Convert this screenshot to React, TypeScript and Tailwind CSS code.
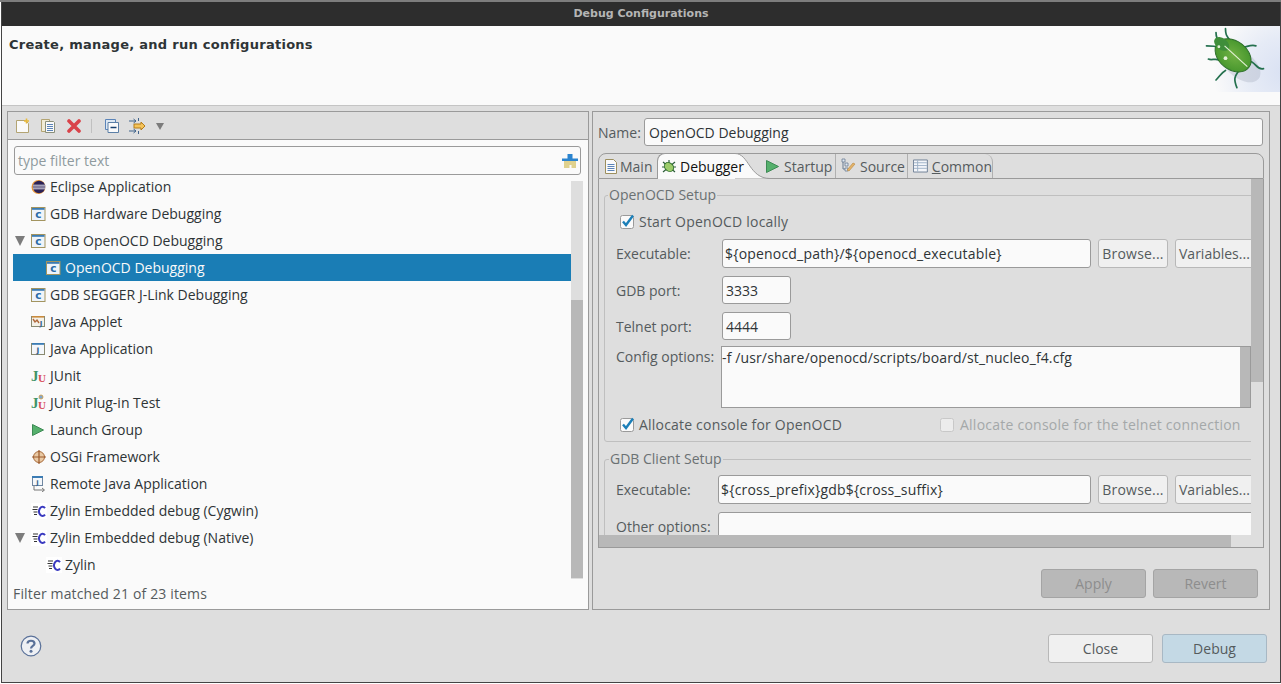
import type { ReactNode } from 'react';

const FONT = 'font-["Open_Sans","Noto_Sans",sans-serif]';

function CAppIcon() {
  return (
    <svg width="16" height="16" viewBox="0 0 16 16">
      <rect x="0.500" y="1.500" width="13.500" height="13" fill="#eef4fa" stroke="#a3945f" />
      <rect x="1" y="2" width="12.500" height="1.800" fill="#3b7cb4" />
      <text x="7.300" y="12.300" textAnchor="middle" fontSize="10.500" fontWeight="700" fill="#2a6ba6" fontFamily="DejaVu Sans">c</text>
    </svg>
  );
}

function JAppIcon() {
  return (
    <svg width="16" height="16" viewBox="0 0 16 16">
      <rect x="0.500" y="2.500" width="13" height="11" fill="#f4f7fb" stroke="#8a8a70" />
      <rect x="1" y="2" width="12" height="1.800" fill="#3b7cb4" />
      <text x="7" y="12" textAnchor="middle" fontSize="7.500" fontWeight="700" fill="#33638f" fontFamily="DejaVu Sans">J</text>
    </svg>
  );
}

function AppletIcon() {
  return (
    <svg width="16" height="16" viewBox="0 0 16 16">
      <rect x="0.500" y="2.500" width="13" height="10" fill="#f4f1e8" stroke="#8a8a70" />
      <path d="M2 5l2 3 2-2 2 3" fill="none" stroke="#b0683a" strokeWidth="1.400" />
      <rect x="1" y="2" width="12" height="1.600" fill="#c98a3c" />
      <text x="10" y="11.500" textAnchor="middle" fontSize="7" fontWeight="700" fill="#33638f" fontFamily="DejaVu Sans">J</text>
    </svg>
  );
}

function JUnitIcon({ plugin }: { plugin?: boolean }) {
  return (
    <svg width="16" height="18" viewBox="0 0 16 18">
      {plugin && <circle cx="10" cy="3" r="2" fill="#7ea6d0" stroke="#d29a3c" strokeWidth="0.800" />}
      <text x="0" y="14" fontSize="15" fontWeight="700" fill="#3f9468" fontFamily="Liberation Serif">J</text>
      <text x="7" y="15" fontSize="11" fontWeight="700" fill="#d8505c" fontFamily="Liberation Serif">U</text>
    </svg>
  );
}

function EclipseIcon() {
  return (
    <svg width="16" height="16" viewBox="0 0 16 16">
      <circle cx="7.500" cy="8" r="7" fill="#e8963a" />
      <circle cx="8.100" cy="8" r="6.200" fill="#2c2255" />
      <path d="M2 6.200h12.500M2 8h13M2 9.800h12.500" stroke="#f2f2f6" strokeWidth="0.900" />
    </svg>
  );
}

function PlayIcon() {
  return (
    <svg width="14" height="14" viewBox="0 0 14 14">
      <path d="M1.500 1.500l11 5.500-11 5.500z" fill="#55b06c" stroke="#3d8a55" />
    </svg>
  );
}

function OsgiIcon() {
  return (
    <svg width="16" height="16" viewBox="0 0 16 16">
      <circle cx="8" cy="8" r="5.500" fill="#e9c9a4" stroke="#a86a3a" />
      <path d="M8 1v14M1 8h14" stroke="#9c5a2c" strokeWidth="1.200" />
    </svg>
  );
}

function RemoteIcon() {
  return (
    <svg width="16" height="17" viewBox="0 0 16 17">
      <rect x="1.500" y="1.500" width="10" height="9" fill="#f4f7fb" stroke="#6f86a0" />
      <rect x="1" y="1" width="11" height="2" fill="#3b7cb4" />
      <text x="6.500" y="9.500" textAnchor="middle" fontSize="6.500" fontWeight="700" fill="#33638f" fontFamily="DejaVu Sans">J</text>
      <path d="M3 11v4h10M11 13l2.500 2-2.500 2" fill="none" stroke="#777" />
    </svg>
  );
}

function ZylinIcon() {
  return (
    <svg width="16" height="16" viewBox="0 0 16 16">
      <rect width="16" height="16" fill="#fff" />
      <path d="M2 4h5M1.500 6.500h5M2.500 9h4M3 11.500h3" stroke="#333" strokeWidth="1.100" />
      <path d="M14 5.200a3.400 4.600 0 1 0 0 6.400" fill="none" stroke="#3a3ac0" strokeWidth="2" />
    </svg>
  );
}

function Expander() {
  return (
    <svg width="10" height="10" viewBox="0 0 10 10">
      <path d="M0 0h10L5 10z" fill="#7c7c7c" />
    </svg>
  );
}

function Bug() {
  const legs = [
    'M27 26C22 18 20 16 20 10',
    'M26 28C20 24 16 24 10 24',
    'M26 40C20 36 16 40 12 38',
    'M30 50C26 52 24 56 20 60',
    'M44 50C40 56 38 58 42 68',
    'M54 40C62 40 62 50 70 48',
    'M46 24C50 28 54 22 62 24',
    'M36 20C32 14 30 14 30 6',
  ];
  return (
    <svg width="75" height="66" viewBox="0 0 75 66" className="shrink-0">
      <defs>
        <radialGradient id="corner" gradientUnits="userSpaceOnUse" cx="80" cy="46" r="72">
          <stop offset="0" stopColor="#d9e1f3" />
          <stop offset="0.500" stopColor="#e6ebf6" />
          <stop offset="1" stopColor="#fafafa" />
        </radialGradient>
        <radialGradient id="shell" cx="0.500" cy="0.500" r="0.650">
          <stop offset="0" stopColor="#6fb043" />
          <stop offset="0.700" stopColor="#4c9a30" />
          <stop offset="1" stopColor="#2c7a2a" />
        </radialGradient>
      </defs>
      <rect width="75" height="66" fill="url(#corner)" />
      <g transform="translate(-8 -3) scale(0.950)">
        <ellipse cx="46" cy="44" rx="24" ry="14" fill="#8a93a8" opacity="0.250" transform="rotate(38 46 44)" />
        {legs.map((d) => (
          <path key={d} d={d} fill="none" stroke="#24704e" strokeWidth="1.800" strokeLinecap="round" />
        ))}
        <ellipse cx="38" cy="34" rx="21" ry="15" fill="url(#shell)" stroke="#2d6e2a" transform="rotate(38 38 34)" />
        <ellipse cx="26" cy="22" rx="9" ry="6" fill="#3f8e3a" transform="rotate(38 26 22)" />
        <path d="M29 24L53 46" stroke="#e6f2d8" strokeWidth="1.200" />
        <circle cx="23" cy="25" r="1.500" fill="#e4f0d8" />
        <circle cx="30" cy="37" r="2" fill="#e4f0d8" />
      </g>
    </svg>
  );
}

function SmallBug() {
  return (
    <svg width="16" height="16" viewBox="0 0 16 16" className="shrink-0">
      <path d="M2 3l12 10M14 3L2 13M1 8h14M8 1v3" stroke="#2d5d3a" strokeWidth="1.200" />
      <ellipse cx="8" cy="8" rx="5" ry="4" fill="#9ccb6a" stroke="#2d6e2a" transform="rotate(40 8 8)" />
    </svg>
  );
}

function Toolbar() {
  return (
    <div className="flex h-[28px] items-center border-b border-[#9a9a9a] bg-[#dedede] pl-[8px]">
      <svg width="16" height="16" viewBox="0 0 16 16">
        <path d="M0.500 2.500h9l3 3v9h-12z" fill="#fafafa" stroke="#b3a473" />
        <path d="M10.500 0.500v5M8 3h5" stroke="#e8b93c" strokeWidth="1.600" />
      </svg>
      <svg className="ml-[8px]" width="16" height="16" viewBox="0 0 16 16">
        <path d="M1.500 1.500h8v12h-8z" fill="#f1ecd6" stroke="#b3a473" />
        <path d="M5.500 3.500h8l1 1v10h-9z" fill="#fafafa" stroke="#8a8f7a" />
        <path d="M7 6.500h6M7 8.500h6M7 10.500h6M7 12.500h6" stroke="#5b84b8" />
      </svg>
      <svg className="ml-[11px]" width="14" height="14" viewBox="0 0 14 14">
        <path d="M2 2l10 10M12 2L2 12" stroke="#d9434a" strokeWidth="3.600" strokeLinecap="round" />
      </svg>
      <div className="ml-[10px] h-[14px] w-px bg-[#c0c0c0]" />
      <svg className="ml-[13px]" width="14" height="14" viewBox="0 0 14 14">
        <path d="M0.500 0.500h10v10h-10z" fill="#dde8f3" stroke="#5b84b8" />
        <path d="M3 3.500h10.500v10H3z" fill="#fafafa" stroke="#5b7fa6" />
        <path d="M5.500 8.500h6" stroke="#173f6e" strokeWidth="1.500" />
      </svg>
      <svg className="ml-[10px]" width="17" height="16" viewBox="0 0 17 16">
        <path d="M0 3h7M0 13h7M4.500 1l2.500 2-2.500 2M4.500 11l2.500 2-2.500 2" fill="none" stroke="#41648c" />
        <path d="M9.500 0v3M9.500 13v3" stroke="#41648c" />
        <path d="M5 6h7V4l4 4-4 4v-2H5z" fill="#f4c35a" stroke="#b47c1a" />
      </svg>
      <svg className="ml-[9px]" width="10" height="10" viewBox="0 0 10 10">
        <path d="M1 2h8L5 9z" fill="#7c7c7c" />
      </svg>
    </div>
  );
}

const TREE: { label: string; icon: ReactNode; level?: boolean; open?: boolean; selected?: boolean }[] = [
  { label: 'Eclipse Application', icon: <EclipseIcon /> },
  { label: 'GDB Hardware Debugging', icon: <CAppIcon /> },
  { label: 'GDB OpenOCD Debugging', icon: <CAppIcon />, open: true },
  { label: 'OpenOCD Debugging', icon: <CAppIcon />, level: true, selected: true },
  { label: 'GDB SEGGER J-Link Debugging', icon: <CAppIcon /> },
  { label: 'Java Applet', icon: <AppletIcon /> },
  { label: 'Java Application', icon: <JAppIcon /> },
  { label: 'JUnit', icon: <JUnitIcon /> },
  { label: 'JUnit Plug-in Test', icon: <JUnitIcon plugin /> },
  { label: 'Launch Group', icon: <PlayIcon /> },
  { label: 'OSGi Framework', icon: <OsgiIcon /> },
  { label: 'Remote Java Application', icon: <RemoteIcon /> },
  { label: 'Zylin Embedded debug (Cygwin)', icon: <ZylinIcon /> },
  { label: 'Zylin Embedded debug (Native)', icon: <ZylinIcon />, open: true },
  { label: 'Zylin', icon: <ZylinIcon />, level: true },
];

function LeftPanel() {
  return (
    <div className="flex h-[499px] w-[582px] flex-col border border-[#9a9a9a] bg-[#fafafa]">
      <Toolbar />
      <div className="pl-[6px] pr-[7px] pt-[6px]">
        <div className="flex h-[29px] items-center justify-between rounded-[3px] border border-[#9a9a9a] bg-[#fafafa] pl-[3px] pr-[2px] text-[#8f9a9e]">
          <span>type filter text</span>
          <svg width="16" height="14" viewBox="0 0 16 14">
            <path d="M2 7h12v7H9.500v-3h-2v3H2z" fill="#dfd18e" />
            <path d="M5.500 0h5v4.500H16v2.500H0V4.500h5.500z" fill="#2b84cf" />
          </svg>
        </div>
      </div>
      <div className="flex h-[404px] pl-[5px]">
        <div className="h-full w-[558px] overflow-hidden">
          <div className="-mt-[2px]">
            {TREE.map((row) => (
              <div
                key={row.label}
                className={`flex h-[27px] items-center ${row.selected ? 'bg-[#1a7db5] text-[#fafafa]' : 'text-[#2e3436]'} ${row.level ? 'pl-[15px]' : ''}`}
              >
                <span className="flex w-[18px] shrink-0 pl-[2px]">{row.open && <Expander />}</span>
                <span className="flex w-[16px] shrink-0 justify-start">{row.icon}</span>
                <span className="ml-[3px] whitespace-nowrap">{row.label}</span>
              </div>
            ))}
          </div>
        </div>
        <div className="mt-[6px] h-[398px] w-[12px] bg-[#dedede] pt-[119px]">
          <div className="h-[278px] bg-[#b8b8b8]" />
        </div>
      </div>
      <div className="flex h-[29px] items-center pl-[5px] tracking-[0.15px] text-[#555b5d]">Filter matched 21 of 23 items</div>
    </div>
  );
}

function Tab({ width, icon, children, last }: { width: string; icon: ReactNode; children: ReactNode; last?: boolean }) {
  return (
    <div className={`flex h-full items-center border-r border-[#b0b0b0] text-[#555b5d] ${width} ${last ? 'rounded-tr-[8px]' : ''}`}>
      {icon}
      {children}
    </div>
  );
}

function TabStrip() {
  return (
    <div className="flex h-[26px] rounded-t-[8px] border-x border-b border-t border-[#9a9a9a] bg-[#dedede]">
      <div className="flex w-[58px] items-center pl-[5px] text-[#555b5d]">
        <svg width="14" height="15" viewBox="0 0 14 15">
          <path d="M1.500 0.500h8l3 3v11h-11z" fill="#fafafa" stroke="#9c8f5e" />
          <path d="M3.500 5.500h7M3.500 7.500h7M3.500 9.500h7M3.500 11.500h7" stroke="#5b84b8" />
        </svg>
        <span className="ml-[2px]">Main</span>
      </div>
      <div className="relative -mb-px -mt-px flex h-[26px] w-[78px] shrink-0 items-center rounded-tl-[8px] border-l border-t border-[#9a9a9a] bg-[#fafafa] pl-[3px] text-[#111]">
        <SmallBug />
        <span className="ml-[3px] whitespace-nowrap">Debugger</span>
      </div>
      <svg className="-mb-px -mt-px shrink-0" width="35" height="26" viewBox="0 0 35 26">
        <path d="M0 0.500C14 0.500 14 25.500 35 25.500H0z" fill="#fafafa" />
        <path d="M0 0.500C14 0.500 14 25.500 35 25.500" fill="none" stroke="#9a9a9a" />
      </svg>
      <Tab
        width="w-[66px]"
        icon={
          <svg className="-ml-[5px] shrink-0" width="15" height="15" viewBox="0 0 15 15">
            <path d="M1.500 1.500l12 6-12 6z" fill="#55b06c" stroke="#3d8a55" />
          </svg>
        }
      >
        <span className="ml-[4px]">Startup</span>
      </Tab>
      <Tab
        width="w-[72px] pl-[4px]"
        icon={
          <svg width="16" height="16" viewBox="0 0 16 16">
            <path d="M2 1h3v3H2zM5 5h3v3H5zM5 10h3v3H5z" fill="#dfe8f2" stroke="#6b7c93" strokeWidth="0.800" />
            <path d="M3 4v7h2" fill="none" stroke="#6b7c93" />
            <path d="M9 13l6-7-2-1-6 7z" fill="#e3b36a" stroke="#b9873a" strokeWidth="0.600" />
          </svg>
        }
      >
        <span className="ml-[4px]">Source</span>
      </Tab>
      <Tab
        width="w-[85px] pl-[5px]"
        last
        icon={
          <svg width="16" height="14" viewBox="0 0 16 14">
            <path d="M0.500 0.500h15v13h-15z" fill="#f4f6fa" stroke="#6b7c93" />
            <path d="M1 3.500h14M1 6.500h14M1 9.500h14M5 1v12" stroke="#9db0c6" />
          </svg>
        }
      >
        <span className="ml-[4px]">
          <span className="underline">C</span>ommon
        </span>
      </Tab>
      <div className="flex-1" />
    </div>
  );
}

function Field({ className, children }: { className: string; children?: ReactNode }) {
  return (
    <div className={`flex shrink-0 items-center rounded-[3px] border border-[#9a9a9a] bg-[#fafafa] text-[#2e3436] ${className}`}>
      <span className="whitespace-nowrap">{children}</span>
    </div>
  );
}

function Btn({ className, children }: { className: string; children: ReactNode }) {
  return (
    <div className={`flex shrink-0 items-center rounded-[3px] border border-[#b8b8b8] bg-[#f0f0f0] text-[#555b5d] ${className}`}>
      {children}
    </div>
  );
}

function Check({ on }: { on?: boolean }) {
  return (
    <svg width="15" height="15" viewBox="0 0 15 15" className="shrink-0">
      <rect x="0.500" y="1.500" width="13" height="13" rx="2" fill={on ? '#fafafa' : '#ececec'} stroke={on ? '#9a9a9a' : '#c8c8c8'} />
      {on && <path d="M3 7.500l3 3.500L13 1.500" fill="none" stroke="#1c7fb8" strokeWidth="2.400" />}
    </svg>
  );
}

function OpenOcdGroup() {
  return (
    <div className="relative ml-[5px] mt-[16px] h-[247px] w-[720px] rounded-[3px] border border-[#bfbfbf] pl-[11px] text-[#555b5d]">
      <span className="absolute -top-[12px] left-[3px] bg-[#dedede] px-px text-[#6b7173]">OpenOCD Setup</span>
      <div className="ml-[4px] mt-[18px] flex h-[15px] items-center">
        <Check on />
        <span className="ml-[4px] tracking-[0.22px]">Start OpenOCD locally</span>
      </div>
      <div className="mt-[10px] flex h-[29px] items-center">
        <span className="w-[106px]">Executable:</span>
        <Field className="h-[29px] w-[369px] px-[2px] tracking-[0.19px]">{'${openocd_path}/${openocd_executable}'}</Field>
        <Btn className="ml-[7px] h-[29px] w-[70px] justify-center tracking-[0.2px]">Browse...</Btn>
        <Btn className="ml-[7px] h-[29px] w-[90px] pl-[3px]">Variables...</Btn>
      </div>
      <div className="mt-[8px] flex h-[28px] items-center">
        <span className="w-[106px]">GDB port:</span>
        <Field className="h-[28px] w-[69px] px-[3px]">3333</Field>
      </div>
      <div className="mt-[8px] flex h-[28px] items-center">
        <span className="w-[106px]">Telnet port:</span>
        <Field className="h-[28px] w-[69px] px-[3px]">4444</Field>
      </div>
      <div className="mt-[6px] flex h-[62px]">
        <span className="w-[105px]">Config options:</span>
        <div className="flex h-[62px] w-[530px] justify-between border border-[#9a9a9a] bg-[#fafafa] text-[#2e3436]">
          <span className="leading-[22px] tracking-[0.13px]">-f /usr/share/openocd/scripts/board/st_nucleo_f4.cfg</span>
          <div className="w-[10px] bg-[#b8b8b8]" />
        </div>
      </div>
      <div className="mt-[9px] flex h-[15px] items-center">
        <span className="ml-[4px] flex w-[320px] items-center">
          <Check on />
          <span className="ml-[4px] tracking-[0.2px]">Allocate console for OpenOCD</span>
        </span>
        <Check />
        <span className="ml-[5px] tracking-[0.24px] text-[#a4a8a9]">Allocate console for the telnet connection</span>
      </div>
    </div>
  );
}

function GdbClientGroup() {
  return (
    <div className="relative ml-[5px] mt-[17px] h-[120px] w-[720px] rounded-[3px] border border-[#bfbfbf] pl-[11px] text-[#555b5d]">
      <span className="absolute -top-[12px] left-[4px] bg-[#dedede] px-px text-[#6b7173]">GDB Client Setup</span>
      <div className="mt-[15px] flex h-[29px] items-center">
        <span className="w-[102px]">Executable:</span>
        <Field className="h-[29px] w-[373px] px-[2px] tracking-[0.19px]">{'${cross_prefix}gdb${cross_suffix}'}</Field>
        <Btn className="ml-[7px] h-[29px] w-[70px] justify-center tracking-[0.2px]">Browse...</Btn>
        <Btn className="ml-[7px] h-[29px] w-[90px] pl-[3px]">Variables...</Btn>
      </div>
      <div className="mt-[8px] flex h-[40px]">
        <span className="w-[102px] pt-[4px]">Other options:</span>
        <Field className="h-[40px] w-[560px]" />
      </div>
    </div>
  );
}

function RightPanel() {
  return (
    <div className="flex h-[499px] w-[678px] flex-col border border-[#9a9a9a] px-[5px] pt-[6px]">
      <div className="flex h-[28px] items-center">
        <span className="w-[46px] text-[#555b5d]">Name:</span>
        <Field className="h-[28px] w-[619px] px-[4px]">OpenOCD Debugging</Field>
      </div>
      <div className="mt-[7px] w-[666px]">
        <TabStrip />
        <div className="border-x border-b border-[#9a9a9a]">
          <div className="flex h-[356px]">
            <div className="w-[652px] overflow-hidden">
              <OpenOcdGroup />
              <GdbClientGroup />
            </div>
            <div className="h-full w-[12px] bg-[#dedede]">
              <div className="h-[203px] bg-[#b8b8b8]" />
            </div>
          </div>
          <div className="h-[12px] bg-[#dedede]">
            <div className="h-full w-[632px] bg-[#b8b8b8]" />
          </div>
        </div>
      </div>
      <div className="mt-[21px] flex justify-end gap-[7px] pr-[6px]">
        <div className="flex h-[29px] w-[105px] items-center justify-center rounded-[3px] border border-[#a4a4a4] bg-[#b8b8b8] text-[#8d8d8d]">Apply</div>
        <div className="flex h-[29px] w-[105px] items-center justify-center rounded-[3px] border border-[#a4a4a4] bg-[#b8b8b8] text-[#8d8d8d]">Revert</div>
      </div>
    </div>
  );
}

export default function App() {
  return (
    <div className={`flex h-[684px] w-[1281px] flex-col overflow-hidden bg-white text-[14px] ${FONT}`}>
      <div className="h-[2px] bg-[#7d7d7d]" />
      <div className="ml-px flex h-[681px] w-[1280px] flex-col border-x border-b border-[#444] bg-[#dedede]">
        <div className="flex h-[24px] shrink-0 items-center justify-center bg-[#2d2d2d] font-['DejaVu_Sans',sans-serif] text-[11px] font-bold text-[#b5b5b5]">
          Debug Configurations
        </div>
        <div className="flex h-[80px] shrink-0 justify-between border-b border-[#c4c4c4] bg-[#fafafa] pl-[7px]">
          <span className="pt-[11px] font-['DejaVu_Sans',sans-serif] text-[13px] font-bold leading-[16px] tracking-[0.27px] text-[#2e3436]">
            Create, manage, and run configurations
          </span>
          <Bug />
        </div>
        <div className="flex gap-[3px] pl-[5px] pt-[5px]">
          <LeftPanel />
          <RightPanel />
        </div>
        <div className="flex items-start justify-between pl-[18px] pr-[13px] pt-[24px]">
          <svg className="mt-px" width="22" height="22" viewBox="0 0 22 22">
            <circle cx="11" cy="11" r="9.800" fill="#eef0f4" stroke="#5a7199" strokeWidth="1.200" />
            <path d="M7.500 8.500C7.500 4.800 14.500 4.800 14.500 8.500C14.500 11 11 10.800 11 13.500" fill="none" stroke="#5a7199" strokeWidth="2.200" />
            <circle cx="11" cy="16.200" r="1.500" fill="#5a7199" />
          </svg>
          <div className="flex gap-[9px]">
            <Btn className="h-[29px] w-[105px] justify-center">Close</Btn>
            <div className="flex h-[29px] w-[105px] items-center justify-center rounded-[3px] border border-[#a8b8c4] bg-[#c4d9e5] text-[#555b5d]">Debug</div>
          </div>
        </div>
      </div>
    </div>
  );
}
